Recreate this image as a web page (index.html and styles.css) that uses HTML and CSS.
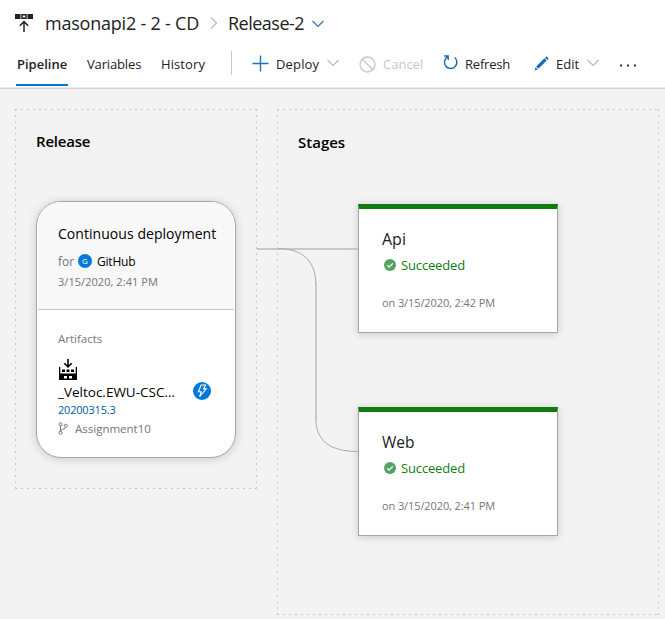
FILE: index.html
```
<!DOCTYPE html>
<html lang="en">
<head>
<meta charset="utf-8">
<title>Release-2 - Pipeline</title>
<link rel="stylesheet" href="styles.css">
</head>
<body>
<header class="header">
  <div class="crumbs">
    <svg class="crumb-icon" width="18" height="20" viewBox="0 0 18 20">
      <path d="M0 0h5.500v5H0zM12.500 0H18v5h-5.500z" fill="#222"/>
      <path d="M7 .8h4v3.500H7z" fill="none" stroke="#222" stroke-width="1.500"/>
      <path d="M9 18V8M4.800 11.800L9 7.600l4.200 4.200" fill="none" stroke="#222" stroke-width="1.500"/>
    </svg>
    <span class="crumb-parent">masonapi2 - 2 - CD</span>
    <svg class="crumb-sep" width="8" height="14" viewBox="0 0 8 14"><path d="M1 1.500L6.500 7 1 12.500" fill="none" stroke="#888"/></svg>
    <span class="crumb-current">Release-2</span>
    <svg class="crumb-chevron" width="12" height="8" viewBox="0 0 12 8"><path d="M.5 1L6 6.500 11.500 1" fill="none" stroke="#3a6f9c" stroke-width="1.100"/></svg>
  </div>
  <nav class="toolbar">
    <a class="tab tab-active">Pipeline</a>
    <a class="tab tab-variables">Variables</a>
    <a class="tab tab-history">History</a>
    <span class="divider"></span>
    <span class="action deploy">
      <svg width="17" height="17" viewBox="0 0 17 17"><path d="M8.500 .5v16M.5 8.500h16" stroke="#1976bd" stroke-width="1.400"/></svg>
      <span class="label">Deploy</span>
      <svg class="chevron" width="12" height="8" viewBox="0 0 12 8"><path d="M.5 1L6 6.500 11.500 1" fill="none" stroke="#5e91b8"/></svg>
    </span>
    <span class="action cancel">
      <svg width="17" height="17" viewBox="0 0 17 17"><circle cx="8.500" cy="8.500" r="7.500" fill="none" stroke="#c8c8c8" stroke-width="1.300"/><path d="M3.200 3.200l10.600 10.600" stroke="#c8c8c8" stroke-width="1.300"/></svg>
      <span class="label">Cancel</span>
    </span>
    <span class="action refresh">
      <svg width="15" height="15" viewBox="0 0 15 15"><path d="M11.700 2.500A6.200 6.200 0 1 1 4.500 1.900M1.200 1h4v4" fill="none" stroke="#1267ae" stroke-width="1.400"/></svg>
      <span class="label">Refresh</span>
    </span>
    <span class="action edit">
      <svg width="15" height="15" viewBox="0 0 15 15"><path d="M.6 14.400l1-3.200 2.200 2.200zM2.200 10.600l8.300-8.300 2.200 2.200-8.300 8.300zM11.100 1.700l.9-.9c.4-.4.800-.3 1.100 0l1.100 1.100c.3.300.3.700 0 1.100l-.9.900z" fill="#0f6cbd"/></svg>
      <span class="label">Edit</span>
      <svg class="chevron" width="12" height="8" viewBox="0 0 12 8"><path d="M.5 1L6 6.500 11.500 1" fill="none" stroke="#5e91b8"/></svg>
    </span>
    <svg class="more" width="18" height="3" viewBox="0 0 18 3"><path d="M1 .5h2v2H1zM8 .5h2v2H8zM15 .5h2v2h-2z" fill="#333"/></svg>
  </nav>
</header>

<main class="canvas">
  <section class="zone release-zone">
    <h2 class="zone-title">Release</h2>
    <article class="release-card">
      <div class="release-top">
        <div class="trigger">Continuous deployment</div>
        <div class="requested"><span class="for">for</span><span class="avatar">G</span><span class="author">GitHub</span></div>
        <div class="date">3/15/2020, 2:41 PM</div>
      </div>
      <div class="artifacts">
        <div class="artifacts-title">Artifacts</div>
        <svg class="build-icon" width="20" height="22" viewBox="0 0 20 22">
          <path d="M10 0v7M6.300 4.200L10 7.900l3.700-3.700" fill="none" stroke="#000" stroke-width="1.600"/>
          <path fill-rule="evenodd" d="M1 8h1.300v6.500h15.400V8H19v13H1zM6 17v2.500h3V17zM11 17v2.500h3V17z" fill="#000"/>
          <path d="M4 10.500h3V13H4zM8.500 10.500h3V13h-3zM13 10.500h3V13h-3z" fill="#000"/>
        </svg>
        <div class="artifact-row">
          <span class="artifact-name">_Veltoc.EWU-CSC...</span>
          <span class="bolt"><svg width="12" height="14" viewBox="0 0 12 14"><path d="M5.200 1h4.300L7.600 4.900h2.700L3.600 12.700l1.500-4.900H2.300z" fill="none" stroke="#fff" stroke-width="1.100"/></svg></span>
        </div>
        <div class="build-number">20200315.3</div>
        <div class="branch">
          <svg width="10" height="13" viewBox="0 0 10 13"><g fill="none" stroke="#777"><circle cx="2.500" cy="2.200" r="1.500"/><circle cx="2.500" cy="10.700" r="1.500"/><circle cx="7.700" cy="3.700" r="1.500"/><path d="M2.500 3.700v5.500M7.700 5.200c0 2-3.200 1.800-4.700 3.200"/></g></svg>
          <span>Assignment10</span>
        </div>
      </div>
    </article>
  </section>

  <section class="zone stages-zone">
    <h2 class="zone-title">Stages</h2>
    <div class="stages">
      <article class="stage">
        <h3 class="stage-name">Api</h3>
        <div class="status">
          <svg width="12" height="12" viewBox="0 0 12 12"><circle cx="6" cy="6" r="6" fill="#55a362"/><path d="M3.200 6.200l1.900 1.900 3.700-3.700" fill="none" stroke="#fff" stroke-width="1.300"/></svg>
          <span class="status-text">Succeeded</span>
        </div>
        <div class="stage-date">on 3/15/2020, 2:42 PM</div>
      </article>
      <article class="stage">
        <h3 class="stage-name web">Web</h3>
        <div class="status">
          <svg width="12" height="12" viewBox="0 0 12 12"><circle cx="6" cy="6" r="6" fill="#55a362"/><path d="M3.200 6.200l1.900 1.900 3.700-3.700" fill="none" stroke="#fff" stroke-width="1.300"/></svg>
          <span class="status-text">Succeeded</span>
        </div>
        <div class="stage-date">on 3/15/2020, 2:41 PM</div>
      </article>
    </div>
  </section>

  <svg class="links" width="101" height="206" viewBox="0 0 101 206">
    <path d="M0 2H101" fill="none" stroke="#c8c8c8" stroke-width="2"/>
    <path d="M59 36V172" fill="none" stroke="#c8c8c8" stroke-width="2"/>
    <path d="M21 1.500C45 1.500 58.800 14 58.800 37M58.800 171C58.800 194 73 204.500 101 204.500" fill="none" stroke="#aaa"/>
  </svg>
</main>
</body>
</html>
```
FILE: styles.css
```
* { box-sizing: border-box; }

body {
  margin: 0;
  width: 665px;
  height: 619px;
  overflow: hidden;
  background: #f3f3f3;
  color: #000;
  font-family: "Open Sans", "Noto Sans", sans-serif;
  font-size: 13px;
  white-space: nowrap;
}

svg { display: block; flex: none; }
h2, h3 { margin: 0; }

.header {
  height: 89px;
  background: #fff;
  border-bottom: 1px solid #d6d6d6;
  box-shadow: inset 0 -1px #ebebeb;
}

.crumbs {
  display: flex;
  align-items: center;
  height: 44px;
  padding: 1px 0 0 15px;
  color: #222;
  font-size: 18px;
}

.crumb-icon { margin: 2px 12px 0 0; }
.crumb-parent { width: 155px; letter-spacing: -0.22px; }
.crumb-sep { margin: 0 10px; }
.crumb-current { width: 84px; letter-spacing: -0.5px; }
.crumb-chevron { margin-top: 2px; }

.toolbar {
  display: flex;
  align-items: center;
  height: 42px;
  padding-left: 16px;
  color: #222;
}

.tab {
  height: 42px;
  line-height: 40px;
  border-bottom: 2px solid transparent;
}

.tab-active {
  width: 52px;
  padding-left: 1px;
  border-color: #0078d4;
  font-weight: 600;
}

.tab-variables { width: 55px; margin-left: 19px; letter-spacing: -0.15px; }
.tab-history { width: 45px; margin-left: 19px; letter-spacing: 0.1px; }

.divider {
  width: 1px;
  height: 24px;
  margin: -4px 20px 0 25px;
  background: #c8c8c8;
}

.action {
  display: flex;
  align-items: center;
  padding-bottom: 2px;
  line-height: 18px;
}

.deploy svg:first-child { margin-top: -2px; }
.deploy .label { width: 51px; margin-left: 7px; letter-spacing: 0.15px; }
.cancel { margin-left: 20px; color: #c8c8c8; }
.cancel .label { width: 41px; margin-left: 7px; }
.refresh { margin-left: 19px; }
.refresh svg { margin-top: -3px; }
.refresh .label { width: 46px; margin-left: 7px; letter-spacing: -0.2px; }
.edit { margin-left: 23px; }
.edit svg:first-child { margin-top: -2px; }
.edit .label { width: 31px; margin-left: 7px; }
.chevron { margin-top: -2px; }
.more { margin-left: 20px; }

.canvas {
  position: relative;
  display: flex;
  align-items: flex-start;
  gap: 20px;
  padding: 20px 0 0 15px;
}

.zone {
  background:
    repeating-linear-gradient(90deg, #c8c8c8 0 2px, transparent 2px 6px) top / 100% 1px no-repeat,
    repeating-linear-gradient(90deg, #c8c8c8 0 2px, transparent 2px 6px) bottom / 100% 1px no-repeat,
    repeating-linear-gradient(180deg, #c8c8c8 0 2px, transparent 2px 6px) left / 1px 100% no-repeat,
    repeating-linear-gradient(180deg, #c8c8c8 0 2px, transparent 2px 6px) right / 1px 100% no-repeat;
}

.release-zone { width: 242px; height: 380px; padding: 22px 21px; }
.stages-zone { width: 382px; height: 506px; padding: 23px 21px; }

.zone-title {
  height: 20px;
  line-height: 20px;
  font-size: 15px;
  font-weight: 600;
}

.release-zone .zone-title { letter-spacing: -0.2px; }

.release-card {
  width: 200px;
  height: 257px;
  margin-top: 50px;
  overflow: hidden;
  background: #fff;
  border: 1px solid #a6a6a6;
  border-radius: 25px;
  box-shadow: 0 1px 10px rgba(0, 0, 0, 0.18);
}

.release-top {
  height: 108px;
  margin: 0 1px;
  padding: 21px 0 0 20px;
  background: #f8f8f8;
  border-bottom: 1px solid #c8c8c8;
}

.trigger { font-size: 14px; line-height: 22px; letter-spacing: 0.05px; }

.requested {
  display: flex;
  align-items: center;
  height: 20px;
  margin-top: 6px;
  font-size: 12px;
}

.for { width: 20px; color: #767676; }

.avatar {
  width: 14px;
  height: 14px;
  margin-right: 5px;
  border-radius: 50%;
  background: #0078d7;
  color: #fff;
  font-size: 8px;
  line-height: 14px;
  text-align: center;
}

.author { letter-spacing: -0.2px; }
.date { margin-top: 1px; color: #767676; font-size: 11px; line-height: 20px; letter-spacing: 0.05px; }

.artifacts { padding: 19px 0 0 21px; }
.artifacts-title { color: #767676; font-size: 11.5px; line-height: 20px; }
.build-icon { margin-top: 10px; }

.artifact-row {
  display: flex;
  align-items: center;
  height: 20px;
}

.artifact-name { width: 135px; padding-top: 2px; font-size: 13.5px; }

.bolt {
  display: grid;
  place-items: center;
  width: 18px;
  height: 18px;
  margin-top: -1px;
  border-radius: 50%;
  background: #0078d7;
}

.build-number {
  color: #005a9e;
  font-size: 11px;
  line-height: 18px;
  letter-spacing: -0.2px;
}

.branch {
  display: flex;
  align-items: center;
  gap: 7px;
  height: 20px;
  margin-top: -1px;
  color: #767676;
  font-size: 11.5px;
}

.stages {
  display: flex;
  flex-direction: column;
  gap: 74px;
  padding: 52px 0 0 60px;
}

.stage {
  width: 200px;
  height: 129px;
  padding: 20px 0 0 23px;
  background: #fff;
  border: 1px solid #a6a6a6;
  border-top: 5px solid #107c10;
  box-shadow: 0 1px 8px rgba(0, 0, 0, 0.18);
}

.stage-name {
  color: #222;
  font-size: 16px;
  font-weight: 400;
  line-height: 20px;
}

.web { font-size: 15.5px; }

.status {
  display: flex;
  align-items: center;
  gap: 5px;
  height: 20px;
  margin-top: 6px;
  padding-left: 2px;
  color: #107c10;
}

.status-text { letter-spacing: -0.15px; }

.stage-date {
  margin-top: 18px;
  color: #767676;
  font-size: 11px;
  line-height: 20px;
  letter-spacing: -0.1px;
}

.links {
  position: absolute;
  left: 257px;
  top: 158px;
}
```
